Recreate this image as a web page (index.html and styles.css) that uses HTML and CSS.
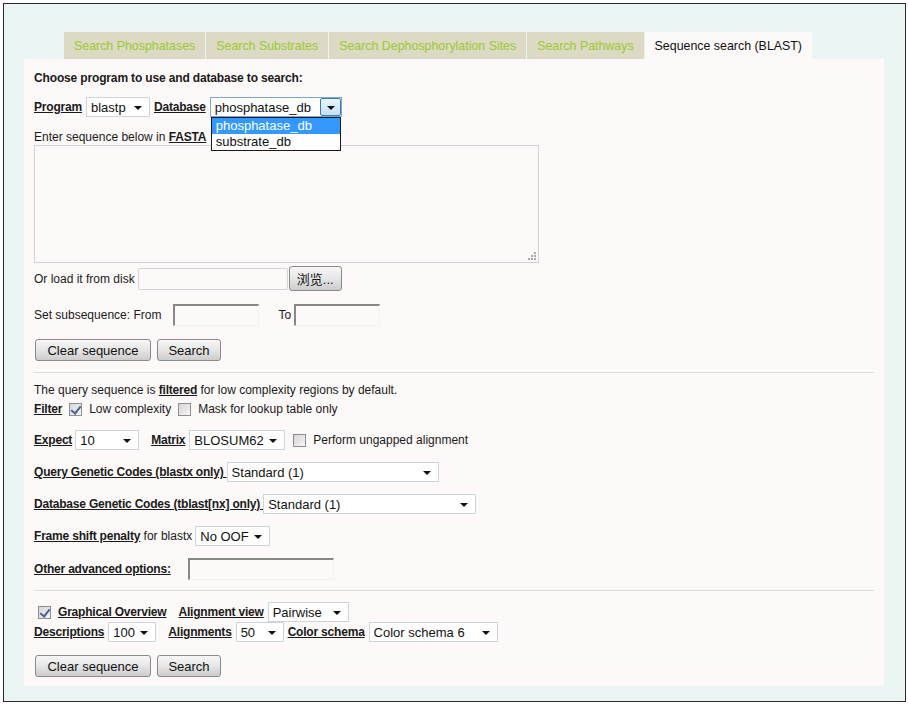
FILE: index.html
```html
<!DOCTYPE html>
<html lang="en">
<head>
  <meta charset="UTF-8" />
  <title>Sequence search (BLAST)</title>
  <link rel="stylesheet" href="styles.css">
</head>
<body>
  <div class="frame">
    <ul class="tabs">
      <li class="tab">Search Phosphatases</li>
      <li class="tab">Search Substrates</li>
      <li class="tab">Search Dephosphorylation Sites</li>
      <li class="tab">Search Pathways</li>
      <li class="tab active">Sequence search (BLAST)</li>
    </ul>

    <form class="panel" onsubmit="return false">
      <p class="heading">Choose program to use and database to search:</p>

      <div class="row row-program">
        <span class="lbl">Program</span>
        <span class="sel w-blastp">
          <select><option>blastp</option><option>blastx</option><option>tblastn</option></select>
        </span>
        <span class="lbl">Database</span>
        <span class="sel sel-focus w-db">
          <select><option>phosphatase_db</option><option>substrate_db</option></select>
          <ul class="db-list">
            <li class="hl">phosphatase_db</li>
            <li>substrate_db</li>
          </ul>
        </span>
      </div>

      <p class="line fasta-line">Enter sequence below in <span class="lbl">FASTA</span></p>
      <div class="seq-box">
        <textarea class="seq"></textarea>
        <svg class="grip" width="10" height="10" viewBox="0 0 10 10">
          <rect x="8" y="2" width="2" height="2" fill="#aaa"/>
          <rect x="5" y="5" width="2" height="2" fill="#aaa"/>
          <rect x="8" y="5" width="2" height="2" fill="#aaa"/>
          <rect x="2" y="8" width="2" height="2" fill="#aaa"/>
          <rect x="5" y="8" width="2" height="2" fill="#aaa"/>
          <rect x="8" y="8" width="2" height="2" fill="#aaa"/>
        </svg>
      </div>

      <div class="row row-load">
        <span>Or load it from disk</span>
        <input type="text" class="file-box">
        <button type="button" class="btn btn-browse">浏览...</button>
      </div>

      <div class="row row-sub">
        <span>Set subsequence: From</span>
        <input type="text" class="inset sub-from">
        <span class="to">To</span>
        <input type="text" class="inset sub-to">
      </div>

      <div class="row buttons">
        <button type="button" class="btn btn-clear">Clear sequence</button>
        <button type="button" class="btn btn-search">Search</button>
      </div>

      <hr class="rule">

      <p class="line query-note">The query sequence is <span class="lbl">filtered</span> for low complexity regions by default.</p>
      <div class="row row-filter">
        <span class="lbl">Filter</span>
        <input type="checkbox" class="cb" checked>
        <span>Low complexity</span>
        <input type="checkbox" class="cb">
        <span>Mask for lookup table only</span>
      </div>

      <div class="row row-expect">
        <span class="lbl">Expect</span>
        <span class="sel w-expect"><select><option>10</option><option>1</option><option>0.1</option></select></span>
        <span class="lbl sp">Matrix</span>
        <span class="sel w-matrix"><select><option>BLOSUM62</option><option>PAM30</option></select></span>
        <input type="checkbox" class="cb cb-ungap">
        <span>Perform ungapped alignment</span>
      </div>

      <div class="row row-gc">
        <span class="lbl">Query Genetic Codes (blastx only)&nbsp;</span>
        <span class="sel w-qgc"><select><option>Standard (1)</option></select></span>
      </div>

      <div class="row row-gc">
        <span class="lbl">Database Genetic Codes (tblast[nx] only)&nbsp;</span>
        <span class="sel w-dbgc"><select><option>Standard (1)</option></select></span>
      </div>

      <div class="row row-frame">
        <span><span class="lbl">Frame shift penalty</span> for blastx</span>
        <span class="sel w-frame"><select><option>No OOF</option></select></span>
      </div>

      <div class="row row-other">
        <span class="lbl">Other advanced options:</span>
        <input type="text" class="inset other-opts">
      </div>

      <hr class="rule rule-2">

      <div class="row row-graph">
        <input type="checkbox" class="cb cb-graph" checked>
        <span class="lbl">Graphical Overview</span>
        <span class="lbl sp">Alignment view</span>
        <span class="sel w-view"><select><option>Pairwise</option></select></span>
      </div>

      <div class="row row-desc">
        <span class="lbl">Descriptions</span>
        <span class="sel w-desc"><select><option>100</option></select></span>
        <span class="lbl sp">Alignments</span>
        <span class="sel w-align"><select><option>50</option></select></span>
        <span class="lbl">Color schema</span>
        <span class="sel w-color"><select><option>Color schema 6</option></select></span>
      </div>

      <div class="row buttons buttons-end">
        <button type="button" class="btn btn-clear">Clear sequence</button>
        <button type="button" class="btn btn-search">Search</button>
      </div>
    </form>
  </div>
</body>
</html>
```

FILE: styles.css
```css
* { box-sizing: border-box; }

body {
  margin: 0;
  font-family: "Liberation Sans", Arial, sans-serif;
  font-size: 12px;
  color: #1a1a1a;
  background: #fff;
}

.frame {
  margin: 3px;
  width: 903px;
  height: 699px;
  border: 1px solid #2b2b2b;
  background: #ebf5f4;
  padding: 28px 20px 0 20px;
}

/* tabs */
.tabs {
  display: flex;
  gap: 1px;
  margin: 0 0 0 40px;
  padding: 0;
  list-style: none;
  height: 27px;
}

.tab {
  padding: 0 10px;
  line-height: 28px;
  background: #dcd9c4;
  color: #9acb2f;
  font-size: 12.4px;
}

.tab.active {
  background: #fdf9f8;
  color: #111;
}

/* panel */
.panel {
  display: block;
  width: 860px;
  background: #fdf9f8;
  padding: 1px 10px 9px;
}

.heading {
  margin: 11px 0 0;
  font-weight: bold;
  line-height: 14px;
  letter-spacing: -0.15px;
}

.line {
  margin: 0;
  line-height: 14px;
}

.lbl {
  font-weight: bold;
  text-decoration: underline;
  white-space: nowrap;
  letter-spacing: -0.2px;
}

.row {
  display: flex;
  align-items: center;
  gap: 4px;
  white-space: nowrap;
}

.sp { margin-left: 8px; }

.row-program { margin-top: 12px; height: 20px; position: relative; z-index: 5; }
.fasta-line { margin-top: 13px; }

/* selects */
.sel {
  position: relative;
  display: inline-block;
  height: 20px;
  border: 1px solid #cfd4da;
  background: #fff;
}

.sel select {
  appearance: none;
  -webkit-appearance: none;
  border: 0;
  outline: none;
  background: transparent;
  width: 100%;
  height: 18px;
  padding: 0 0 0 4px;
  font-family: "Liberation Sans", Arial, sans-serif;
  font-size: 13px;
  color: #111;
}

.sel::after {
  content: "";
  position: absolute;
  right: 7px;
  top: 8px;
  border-left: 4px solid transparent;
  border-right: 4px solid transparent;
  border-top: 4px solid #111;
  pointer-events: none;
}

.sel-focus { border-color: #7fa7d6; }

.sel-focus::before {
  content: "";
  position: absolute;
  right: 0;
  top: 0;
  bottom: 0;
  width: 19px;
  border: 1px solid #3d7bb3;
  border-radius: 2px;
  background: linear-gradient(#eaf6fd, #c2e2f5);
  pointer-events: none;
}

.sel-focus::after { right: 6px; }

.w-blastp { width: 64px; }
.w-db { width: 132px; }
.w-expect { width: 64px; }
.w-matrix { width: 96px; }
.w-qgc { width: 212px; }
.w-dbgc { width: 213px; }
.w-frame { width: 75px; }
.w-view { width: 81px; }
.w-desc { width: 48px; }
.w-align { width: 48px; }
.w-color { width: 129px; }

.db-list {
  position: absolute;
  left: 0;
  top: 19px;
  width: 130px;
  margin: 0;
  padding: 0;
  list-style: none;
  background: #fff;
  border: 1px solid #1a1a1a;
  font-size: 13px;
  z-index: 10;
}

.db-list li {
  height: 16px;
  line-height: 16px;
  padding-left: 4px;
  color: #111;
}

.db-list li.hl {
  background: #3399ff;
  color: #fff;
}

/* sequence textarea */
.seq-box {
  position: relative;
  width: 505px;
  margin-top: 1px;
}

.seq {
  display: block;
  width: 505px;
  height: 118px;
  border: 1px solid #cfd1d4;
  background: #fdf9f8;
  resize: none;
  outline: none;
}

.grip {
  position: absolute;
  right: 3px;
  bottom: 3px;
}

.row-load { margin-top: 3px; height: 25px; gap: 0; }
.row-load .file-box { margin-left: 3px; }

.file-box {
  width: 150px;
  height: 22px;
  border: 1px solid #d2d4d8;
  border-radius: 2px;
  background: #fdf9f8;
}

.row-sub { margin-top: 13px; height: 22px; gap: 0; }

.inset {
  height: 22px;
  border-style: solid;
  border-width: 2px 1px 1px 2px;
  border-color: #878787 #f6f2f0 #f6f2f0 #878787;
  background: transparent;
  outline: none;
}

.sub-from { width: 86px; margin-left: 12px; }
.to { margin-left: 19px; margin-right: 3px; }
.sub-to { width: 86px; }

/* buttons */
.buttons { margin-top: 13px; height: 22px; gap: 6px; padding-left: 1px; }

.btn {
  height: 22px;
  padding: 0;
  border: 1px solid #8a8a8a;
  border-radius: 3px;
  background: linear-gradient(#f7f7f7, #e6e6e6 50%, #cdcdcd);
  font-family: "Liberation Sans", Arial, sans-serif;
  font-size: 13px;
  color: #111;
}

.btn-clear { width: 116px; }
.btn-search { width: 64px; }

.btn-browse {
  width: 53px;
  height: 25px;
  margin-left: 1px;
  font-family: "Liberation Sans", "Noto Sans CJK SC", sans-serif;
}

.rule {
  margin: 11px 0 0;
  border: 0;
  border-top: 1px solid #dcdcdc;
  height: 0;
}

.rule-2 { margin-top: 10px; }

.query-note { margin-top: 10px; }

/* checkboxes */
.cb {
  appearance: none;
  -webkit-appearance: none;
  position: relative;
  width: 13px;
  height: 13px;
  margin: 0 3px;
  border: 1px solid #8f8f8f;
  background: linear-gradient(135deg, #d6d6d6, #f6f6f6);
}

.cb:checked::after {
  content: "";
  position: absolute;
  left: 3px;
  top: 0;
  width: 4px;
  height: 8px;
  border: solid #4a5f95;
  border-width: 0 2px 2px 0;
  transform: rotate(38deg);
}

.row-filter { margin-top: 5px; height: 14px; }
.row-filter .cb { margin: 0 3px 0 3px; }

.row-expect { margin-top: 14px; height: 20px; }
.row-expect .w-expect { margin-left: -1px; }
.cb-ungap { margin: 0 3px 0 4px; }

.row-gc { margin-top: 12px; height: 20px; gap: 0; }

.row-frame { margin-top: 12px; height: 20px; gap: 3px; }

.row-other { margin-top: 12px; height: 22px; }
.other-opts { width: 146px; margin-left: 13px; }

.row-graph { margin-top: 11px; height: 20px; }
.cb-graph { margin: 0 3px 0 4px; }

.row-desc { margin-top: 0; height: 20px; }

.buttons-end { margin-top: 13px; }
```
